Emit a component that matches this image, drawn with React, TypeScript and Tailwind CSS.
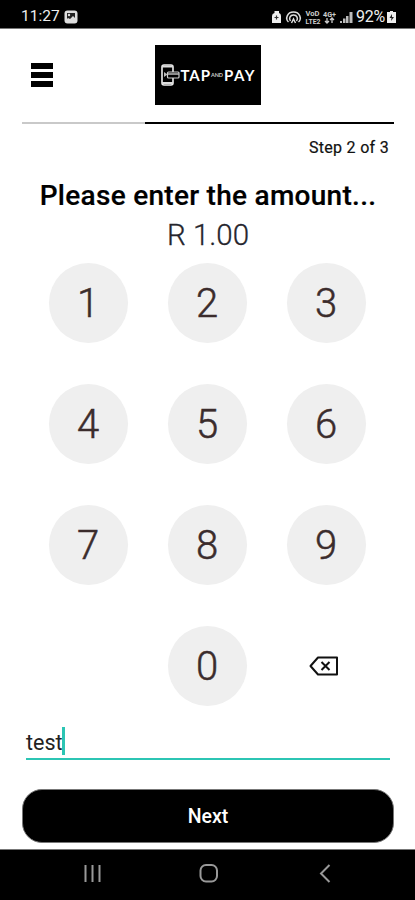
import React from "react";

function StatusBar() {
  return (
    <div className="flex h-[29px] items-center justify-between border-b border-[#777] bg-black pr-[19px] pl-[21px] pt-[5px] text-[#eee]">
      <div className="flex items-center gap-[6px]">
        <span className="w-[37px] whitespace-nowrap text-[15.5px] leading-none">11:27</span>
        <svg width="14" height="14" viewBox="0 0 14 14">
          <rect x="0.5" y="0.5" width="13" height="13" rx="3" fill="#ddd" />
          <path d="M3 3h8v5l-2-2-3 3-2-1-1 1z" fill="#222" />
          <circle cx="5" cy="5" r="1.2" fill="#ddd" />
        </svg>
      </div>
      <div className="flex items-center">
        <svg width="82" height="16" viewBox="0 0 82 16" className="mr-[2px]">
          <path d="M0 14V7Q0 4.500 2.500 4V2h4.500V4Q9 4.500 9 7v7z" fill="#eee" />
          <path d="M2.500 8.500h4M4.500 6.500v4" stroke="#333" strokeWidth="1.200" />
          <g fill="none" stroke="#ddd" strokeWidth="1.500">
            <path d="M16.500 13C13 10 15 3 21.500 3S30 10 26.500 13" />
            <path d="M18.500 12C16.500 9.500 18 6 21.500 6S26.500 9.500 24.500 12" />
            <path d="M19.500 14l2-4 2 4" />
          </g>
          <g fill="#ccc" fontFamily="Roboto, sans-serif" fontWeight="700">
            <text x="33.500" y="7" fontSize="6.500" textLength="14" lengthAdjust="spacingAndGlyphs">VoD</text>
            <text x="33.500" y="15" fontSize="6.500" textLength="15" lengthAdjust="spacingAndGlyphs">LTE2</text>
            <text x="51" y="7.500" fontSize="7" textLength="13" lengthAdjust="spacingAndGlyphs">4G+</text>
          </g>
          <path d="M55 9v5m-2-2l2 2 2-2M60 14V9m-2 2l2-2 2 2" stroke="#ccc" strokeWidth="1.300" fill="none" />
          <path d="M68 12h2v2h-2zM71 9.500h2.500V14H71zM74 7h2.500v7H74zM77.500 3H80.500v11h-3z" fill="#bbb" />
        </svg>
        <span className="w-[31px] whitespace-nowrap text-[16px] leading-none tracking-[-0.3px]">92%</span>
        <svg width="9" height="14" viewBox="0 0 9 14">
          <path d="M3 1h3v1h3v11H0V2h3z" fill="#eee" />
          <path d="M5 4L2.500 8h2L4 11l3-4H5z" fill="#222" />
        </svg>
      </div>
    </div>
  );
}

function Logo() {
  return (
    <div className="h-[60px] w-[106px] bg-black">
      <svg width="106" height="60" viewBox="0 0 106 60">
        <rect x="7" y="20" width="11" height="20" rx="2" fill="none" stroke="#eee" strokeWidth="1.600" />
        <path d="M7 21.500h11M7 38h11" stroke="#ddd" strokeWidth="2" />
        <path d="M9 27l3.500 2.500L9 32z" fill="#bbb" />
        <rect x="12.500" y="27" width="11.500" height="6" rx="1" fill="#000" stroke="#ccc" strokeWidth="1.200" />
        <path d="M13 29h11" stroke="#bbb" strokeWidth="1.500" />
        <g fill="#fff" fontFamily="Lato, sans-serif" fontWeight="700">
          <text x="25.500" y="35.500" fontSize="15" textLength="29.500">TAP</text>
          <text x="56" y="32" fontSize="5.500" textLength="12" fill="#ccc">AND</text>
          <text x="69" y="35.500" fontSize="15" textLength="30.500">PAY</text>
        </g>
      </svg>
    </div>
  );
}

function Key({ label }: { label: string }) {
  return (
    <button className="flex h-[80px] w-[79px] items-center justify-center rounded-full bg-[#efefef] text-[40px] leading-none font-light text-[#3b2c2c]">
      <span className="-translate-x-[0.5px] translate-y-px [-webkit-text-stroke:0.5px_#3b2c2c]">{label}</span>
    </button>
  );
}

export default function App() {
  return (
    <div className="flex h-[900px] w-[415px] flex-col overflow-hidden bg-white font-[Roboto,sans-serif]">
      <StatusBar />
      <header className="flex h-[92px] items-start pt-[16px] pl-[31px]">
        <div className="mt-[18px] flex w-[22px] flex-col gap-[3px]">
          <span className="h-[6px] bg-black" />
          <span className="h-[6px] bg-black" />
          <span className="h-[6px] bg-black" />
        </div>
        <div className="ml-[102px]">
          <Logo />
        </div>
      </header>
      <div className="mr-[21px] ml-[22px] flex h-[3px] items-center">
        <span className="h-[2px] w-[123px] bg-[#c9c9c9]" />
        <span className="h-[2px] flex-1 bg-black" />
      </div>
      <p className="mt-[14px] pr-[26px] text-right text-[16px] leading-[20px] tracking-[0.3px] text-[#111] [-webkit-text-stroke:0.2px_#111]">
        Step 2 of 3
      </p>
      <h1 className="mt-[22px] pl-px text-center text-[28px] leading-[32px] font-medium tracking-[0.28px] whitespace-nowrap text-black [-webkit-text-stroke:0.2px_#000]">
        Please enter the amount...
      </h1>
      <p className="mt-[6px] pl-px text-center text-[29.5px] leading-[34px] font-light text-[#25252d] [-webkit-text-stroke:0.3px_#25252d]">R 1.00</p>
      <div className="mt-[11px] ml-[49px] grid grid-cols-[79px_79px_79px] gap-x-[40px] gap-y-[41px]">
        {["1", "2", "3", "4", "5", "6", "7", "8", "9"].map((n) => (
          <Key key={n} label={n} />
        ))}
        <span />
        <Key label="0" />
        <button className="flex items-center justify-center pr-[6px]">
          <svg width="30" height="20" viewBox="0 0 30 20" fill="none" stroke="#111" strokeWidth="2">
            <path d="M9 1.500h19v17H9L1.500 10z" strokeLinejoin="round" />
            <path d="M12.500 6l8 8m0-8l-8 8" />
          </svg>
        </button>
      </div>
      <div className="mr-[25px] ml-[26px] mt-[20px] flex h-[34px] items-start border-b-2 border-[#2cc5b4]">
        <span className="mt-[5px] w-[36px] text-[21.5px] leading-[24px] text-[#222]">test</span>
        <span className="mt-[1px] h-[28px] w-[2.5px] bg-[#2cc5b4]" />
      </div>
      <button className="mr-[21px] ml-[22px] mt-[29px] h-[54px] rounded-[20px] border border-[#777] bg-black pt-[2px] text-[19.5px] font-medium text-white">
        Next
      </button>
      <nav className="mt-auto h-[51px] border-t border-[#777] bg-black">
        <svg width="415" height="50" viewBox="0 0 415 50" fill="none" stroke="#999" strokeWidth="2">
          <path d="M85.500 15v17M92.500 15v17M99.500 15v17" />
          <rect x="200.500" y="15" width="16.500" height="16.500" rx="5.500" />
          <path d="M329.500 15l-8.500 8.500 8.500 8.500" />
        </svg>
      </nav>
    </div>
  );
}
